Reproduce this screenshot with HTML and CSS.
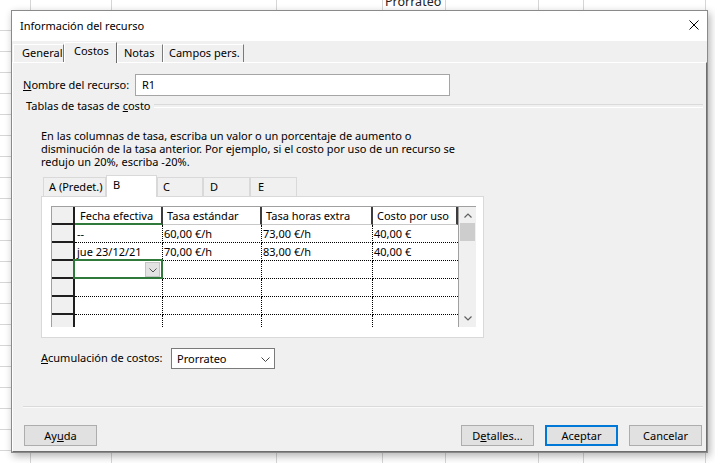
FILE: index.html
```html
<!DOCTYPE html>
<html lang="es">
<head>
<meta charset="utf-8">
<title>Información del recurso</title>
<link rel="stylesheet" href="styles.css">
</head>
<body>
<div class="sheet-top"><span class="sheet-cell">Prorrateo</span></div>

<div class="dialog">
  <div class="titlebar">
    <span class="title">Información del recurso</span>
    <svg class="close" width="10" height="10" viewBox="0 0 10 10"><path d="M0.5 0.5L9.5 9.5M9.5 0.5L0.5 9.5" stroke="#000" stroke-width="1" fill="none"/></svg>
  </div>
  <div class="tabs">
    <div class="tab t-general">General</div>
    <div class="tab t-costos active">Costos</div>
    <div class="tab t-notas">Notas</div>
    <div class="tab t-campos">Campos pers.</div>
  </div>
  <div class="panel">
    <div class="name-row">
      <span class="name-label"><u>N</u>ombre del recurso:</span>
      <div class="textbox">R1</div>
    </div>
    <div class="group-head"><span>Tablas de tasas de <u>c</u>osto</span></div>
    <p class="desc">En las columnas de tasa, escriba un valor o un porcentaje de aumento o<br>disminución de la tasa anterior. Por ejemplo, si el costo por uso de un recurso se<br>redujo un 20%, escriba -20%.</p>
    <div class="rate-tabs">
      <div class="rtab w-a">A (Predet.)</div>
      <div class="rtab w-b active">B</div>
      <div class="rtab w-c">C</div>
      <div class="rtab w-d">D</div>
      <div class="rtab w-e">E</div>
    </div>
    <div class="rate-panel">
      <div class="grid">
        <div class="table">
          <div class="rh"></div>
          <div class="hd sel">Fecha efectiva</div>
          <div class="hd">Tasa estándar</div>
          <div class="hd">Tasa horas extra</div>
          <div class="hd">Costo por uso</div>

          <div class="rh"></div>
          <div class="c date">--</div>
          <div class="c">60,00 €/h</div>
          <div class="c">73,00 €/h</div>
          <div class="c last">40,00 €</div>

          <div class="rh"></div>
          <div class="c date">jue 23/12/21</div>
          <div class="c">70,00 €/h</div>
          <div class="c">83,00 €/h</div>
          <div class="c last">40,00 €</div>

          <div class="rh"></div>
          <div class="c date edit">
            <span class="dd"><svg width="8" height="5" viewBox="0 0 8 5"><path d="M0.5 0.5L4 4L7.5 0.5" stroke="#555" fill="none"/></svg></span>
          </div>
          <div class="c"></div>
          <div class="c"></div>
          <div class="c last"></div>

          <div class="rh"></div>
          <div class="c date"></div>
          <div class="c"></div>
          <div class="c"></div>
          <div class="c last"></div>

          <div class="rh"></div>
          <div class="c date"></div>
          <div class="c"></div>
          <div class="c"></div>
          <div class="c last"></div>

          <div class="rh"></div>
          <div class="c date"></div>
          <div class="c"></div>
          <div class="c"></div>
          <div class="c last"></div>
        </div>
        <div class="vscroll">
          <div class="sb-btn"><svg width="8" height="5" viewBox="0 0 8 5"><path d="M0.5 4.5L4 1L7.5 4.5" stroke="#606060" stroke-width="1.2" fill="none"/></svg></div>
          <div class="sb-thumb"></div>
          <div class="sb-track"></div>
          <div class="sb-btn down"><svg width="8" height="5" viewBox="0 0 8 5"><path d="M0.5 0.5L4 4L7.5 0.5" stroke="#606060" stroke-width="1.2" fill="none"/></svg></div>
        </div>
      </div>
    </div>
    <div class="accrue-row">
      <span class="accrue-label"><u>A</u>cumulación de costos:</span>
      <div class="select"><span>Prorrateo</span><svg width="9" height="5" viewBox="0 0 9 5"><path d="M0.5 0.5L4.5 4.5L8.5 0.5" stroke="#444" fill="none"/></svg></div>
    </div>
    <div class="sep"></div>
    <div class="buttons">
      <button class="btn">Ay<u>u</u>da</button>
      <div class="spacer"></div>
      <button class="btn">D<u>e</u>talles...</button>
      <button class="btn default">Aceptar</button>
      <button class="btn">Cancelar</button>
    </div>
  </div>
</div>
</body>
</html>
```
FILE: styles.css
```css
* { box-sizing: border-box; }
html, body { margin: 0; padding: 0; }
body {
  width: 715px;
  height: 463px;
  overflow: hidden;
  position: relative;
  font-family: "Noto Sans", "Open Sans", sans-serif;
  font-size: 11px;
  color: #000;
  background-color: #fff;
  background-image:
    linear-gradient(#d6d6d6, #d6d6d6),
    linear-gradient(#d6d6d6, #d6d6d6),
    linear-gradient(#d6d6d6, #d6d6d6),
    linear-gradient(#d6d6d6, #d6d6d6),
    linear-gradient(#d6d6d6, #d6d6d6),
    linear-gradient(#d6d6d6, #d6d6d6),
    linear-gradient(#d6d6d6, #d6d6d6),
    linear-gradient(#d6d6d6, #d6d6d6),
    repeating-linear-gradient(to bottom, transparent 0 20px, #d6d6d6 20px 21px);
  background-size: 1px 100%, 1px 100%, 1px 100%, 1px 100%, 1px 100%, 1px 100%, 1px 100%, 1px 100%, 30px 100%;
  background-position: 30px 0, 111px 0, 276px 0, 382px 0, 445px 0, 538px 0, 583px 0, 705px 0, 0 10px;
  background-repeat: no-repeat;
}

.sheet-top { height: 10px; padding-left: 385px; }
.sheet-cell { display: block; margin-top: -6px; font-size: 12.5px; line-height: 16px; color: #222; }

.dialog {
  position: absolute;
  left: 11px;
  top: 10px;
  width: 697px;
  height: 443px;
  border: 1px solid #8a8a8a;
  background: #f0f0f0;
  box-shadow: 2px 3px 8px rgba(0, 0, 0, 0.3);
  display: flex;
  flex-direction: column;
}

.titlebar {
  height: 30px;
  flex: none;
  background: #fff;
  display: flex;
  align-items: center;
  justify-content: space-between;
  padding: 0 8px 2px 8px;
}
.title { line-height: 15px; }
.close { display: block; }

.tabs {
  height: 21px;
  flex: none;
  display: flex;
  align-items: flex-end;
  padding-left: 1px;
}
.tab {
  height: 18px;
  border-top: 1px solid #fff;
  border-left: 1px solid #fff;
  border-right: 1px solid #7a7a7a;
  line-height: 16px;
  white-space: nowrap;
  background: #f0f0f0;
}
.tab.active {
  height: 21px;
  margin-bottom: -1px;
  position: relative;
  z-index: 1;
  border-right-color: #6a6a6a;
}
.t-general { width: 51px; padding-left: 8px; }
.t-costos { width: 53px; padding-left: 9px; }
.t-notas { width: 46px; padding-left: 6px; }
.t-campos { width: 81px; padding-left: 5px; }

.panel {
  height: 390px;
  flex: none;
  border-top: 1px solid #fff;
  border-left: 1px solid #fff;
  border-right: 1px solid #6e6e6e;
  border-bottom: 1px solid #6e6e6e;
  display: flex;
  flex-direction: column;
}

.name-row {
  margin: 11px 0 0 10px;
  display: flex;
  align-items: center;
  height: 22px;
}
.name-label { width: 112px; line-height: 15px; margin-top: -2px; }
.textbox {
  width: 315px;
  height: 22px;
  background: #fff;
  border: 1px solid #a5a5a5;
  padding-left: 6px;
  line-height: 20px;
}

.group-head {
  margin-top: 3px;
  height: 14px;
  padding-left: 13px;
  display: flex;
}
.group-head span { line-height: 14px; white-space: nowrap; }
.group-head::after {
  content: "";
  flex: 1;
  height: 2px;
  margin: 5px 3px 0 3px;
  border-top: 1px solid #dadada;
  border-bottom: 1px solid #fff;
}

.desc {
  margin: 16px 0 0 28px;
  line-height: 13px;
  white-space: nowrap;
}

.rate-tabs {
  margin: 7px 0 0 30px;
  height: 21px;
  display: flex;
  align-items: flex-end;
}
.rtab {
  height: 19px;
  border: 1px solid #d9d9d9;
  border-bottom: none;
  background: #f0f0f0;
  line-height: 17px;
  padding-left: 5px;
  white-space: nowrap;
}
.rtab.active {
  height: 22px;
  margin-bottom: -1px;
  background: #fff;
  position: relative;
  z-index: 1;
  line-height: 17px;
  padding-left: 6px;
}
.w-a { width: 63px; }
.w-b { width: 51px; }
.w-c { width: 46px; }
.w-d { width: 47px; padding-left: 6px; }
.w-e { width: 47px; padding-left: 7px; }

.rate-panel {
  margin-left: 28px;
  width: 443px;
  height: 142px;
  background: #fff;
  border: 1px solid #d9d9d9;
  padding: 9px 0 0 9px;
}

.grid {
  display: flex;
  width: 425px;
  height: 121px;
  overflow: hidden;
  border-top: 1px solid #a0a0a0;
  border-left: 1px solid #a0a0a0;
}
.table {
  display: grid;
  grid-template-columns: 23px 88px 99px 111px 85px;
  grid-auto-rows: 18px;
  align-content: start;
}
.rh {
  background: #f0f0f0;
  border-right: 2px solid #1e1e1e;
  border-bottom: 2px solid #1e1e1e;
}
.hd {
  background: #fff;
  border-right: 2px solid #3c3c3c;
  border-bottom: 1px solid #c8c8c8;
  padding: 1px 0 0 4px;
  line-height: 16px;
  white-space: nowrap;
  overflow: hidden;
}
.hd.sel { border-bottom: 2px solid #2f7a3b; padding-left: 5px; }
.c {
  border-right: 1px dotted #000;
  border-bottom: 1px dotted #000;
  padding-left: 1px;
  line-height: 17px;
  white-space: nowrap;
  overflow: visible;
}
.c.date { padding-left: 2px; }
.c.last { border-right: none; }
.c.edit { position: relative; }
.c.edit::after {
  content: "";
  position: absolute;
  top: -2px;
  left: -2px;
  right: -1px;
  bottom: -1px;
  border: 2px solid #2f7a3b;
}
.dd {
  position: absolute;
  top: 1px;
  right: 2px;
  width: 15px;
  height: 15px;
  background: #e3e3e3;
  border: 1px solid #c4c4c4;
  display: flex;
  align-items: center;
  justify-content: center;
}
.dd svg { display: block; margin-top: 1px; }

.vscroll {
  width: 18px;
  border-left: 1px solid #a0a0a0;
  background: #f0f0f0;
  display: flex;
  flex-direction: column;
}
.sb-btn {
  height: 16px;
  display: flex;
  align-items: center;
  justify-content: center;
}
.sb-btn svg { display: block; }
.sb-btn.down { height: 17px; }
.sb-thumb { height: 18px; margin: 0 1px; background: #cdcdcd; }
.sb-track { flex: 1; }

.accrue-row {
  margin: 10px 0 0 28px;
  display: flex;
  align-items: center;
}
.accrue-label { width: 130px; line-height: 15px; margin-top: -3px; }
.select {
  width: 104px;
  height: 21px;
  background: #fff;
  border: 1px solid #7a7a7a;
  display: flex;
  align-items: center;
  padding: 0 4px 0 5px;
  line-height: 17px;
}
.select span { flex: 1; }
.select svg { display: block; margin-top: 1px; }

.sep {
  margin: 37px 3px 0 10px;
  height: 2px;
  border-top: 1px solid #dadada;
  border-bottom: 1px solid #fafafa;
}

.buttons {
  margin-top: 17px;
  display: flex;
  padding: 0 4px 0 11px;
  gap: 11px;
}
.spacer { flex: 1; }
.btn {
  width: 73px;
  height: 21px;
  padding: 0;
  margin: 0;
  font: inherit;
  color: #000;
  background: #e1e1e1;
  border: 1px solid #adadad;
  line-height: 15px;
  text-align: center;
}
.btn.default { border: 2px solid #0078d7; }
```
